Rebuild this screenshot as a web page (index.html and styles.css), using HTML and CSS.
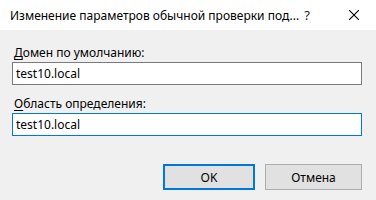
FILE: index.html
```html
<!DOCTYPE html>
<html lang="ru">
<head>
<meta charset="utf-8">
<link rel="stylesheet" href="styles.css">
</head>
<body>
<div class="dialog">
  <div class="titlebar">
    <span class="title">Изменение параметров обычной проверки под...</span>
    <span class="help">?</span>
    <svg class="close" width="10" height="10" viewBox="0 0 10 10"><path d="M0 0 L10 10 M10 0 L0 10" stroke="#000" stroke-width="1.1" fill="none"/></svg>
  </div>
  <div class="content">
    <div class="field first">
      <div class="label"><u>Д</u>омен по умолчанию:</div>
      <div class="input">test10.local</div>
    </div>
    <div class="field">
      <div class="label"><u>О</u>бласть определения:</div>
      <div class="input focused">test10.local</div>
    </div>
    <div class="buttons">
      <div class="btn default">OK</div>
      <div class="btn cancel">Отмена</div>
    </div>
  </div>
</div>
</body>
</html>
```
FILE: styles.css
```css
html, body {
  margin: 0;
  padding: 0;
}
body {
  width: 376px;
  height: 200px;
  background: #f0f0f0;
  font-family: "Noto Sans", "Open Sans", sans-serif;
  font-size: 12px;
  color: #000;
  overflow: hidden;
}
.titlebar {
  height: 30px;
  background: #fff;
  display: flex;
  align-items: center;
}
.title {
  flex: none;
  box-sizing: border-box;
  padding-left: 10px;
  width: 302px;
  white-space: nowrap;
  overflow: hidden;
}
.help {
  flex: none;
  width: 10px;
  text-align: center;
  font-size: 13px;
  color: #222;
}
.close {
  flex: none;
  display: block;
  margin-left: 37px;
  width: 10px;
  height: 10px;
}
.content {
  padding: 0 14px 0 12px;
}
.field {
  margin-top: 11px;
}
.field.first {
  margin-top: 15px;
}
.label {
  padding-left: 2px;
  line-height: 15px;
  height: 15px;
}
.label u {
  text-decoration-thickness: 1px;
  text-underline-offset: 2px;
}
.input {
  margin-top: 2px;
  height: 21px;
  border: 1px solid #7a7a7a;
  background: #fff;
  line-height: 21px;
  padding-left: 3px;
}
.input.focused {
  border-color: #0078d7;
}
.buttons {
  margin-top: 28px;
  display: flex;
  justify-content: flex-end;
  gap: 10px;
}
.btn {
  box-sizing: border-box;
  height: 26px;
  background: #e1e1e1;
  border: 1px solid #adadad;
  display: flex;
  align-items: center;
  justify-content: center;
}
.btn.default {
  width: 92px;
  border: 2px solid #0078d7;
}
.btn.cancel {
  width: 97px;
}
```
